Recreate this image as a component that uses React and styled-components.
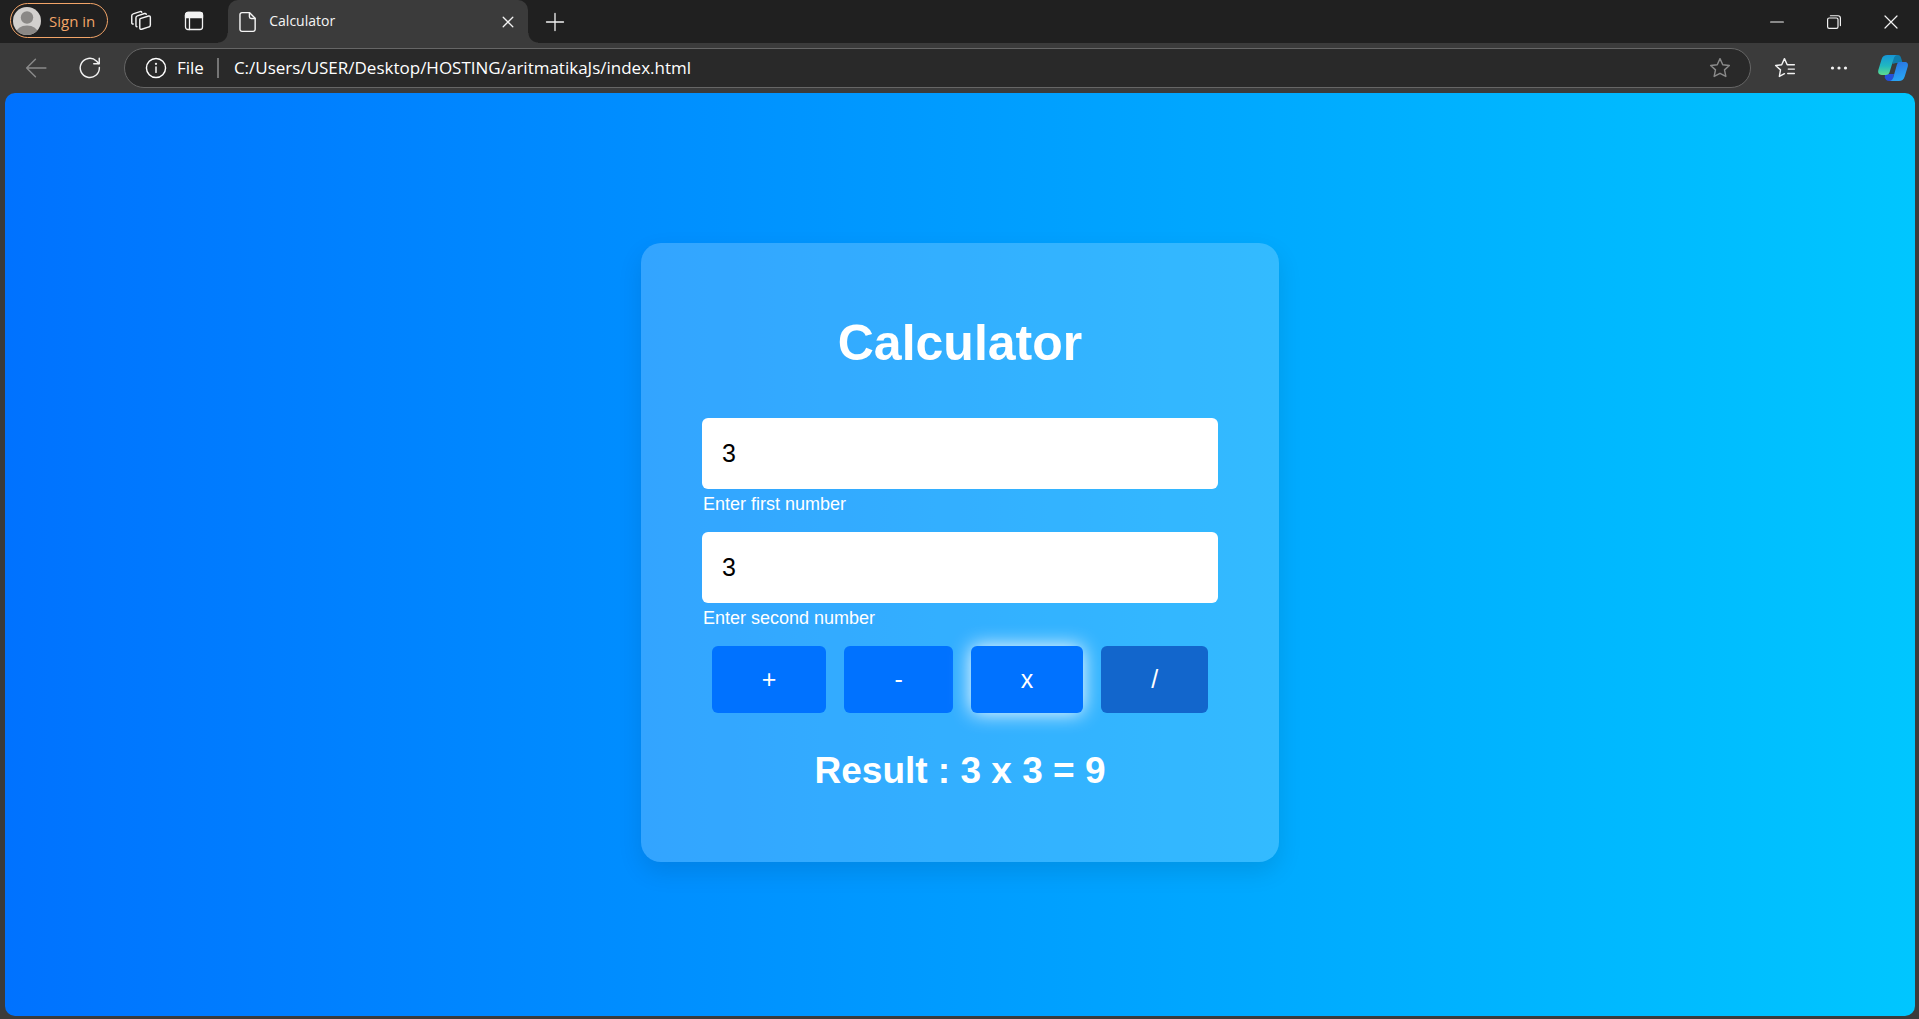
import React, { useState } from "react";
import styled, { createGlobalStyle, css } from "styled-components";

const GlobalStyle = createGlobalStyle`
  *, *::before, *::after { box-sizing: border-box; }
  body { margin: 0; background: #3b3b3b; font-family: "Liberation Sans", Arial, sans-serif; }
  button, input { font-family: inherit; }
`;

const uiFont = css`
  font-family: "Segoe UI", "Open Sans", "Noto Sans", sans-serif;
`;

const Window = styled.div`
  display: flex;
  flex-direction: column;
  min-height: 100vh;
  background: #3b3b3b;
`;

const TabStrip = styled.header`
  ${uiFont}
  display: flex;
  height: 43px;
  background: #202020;
`;

const StripTools = styled.div`
  display: flex;
  align-items: center;
  gap: 13px;
  padding: 0 14px 2px 10px;
`;

const IconButton = styled.button`
  display: flex;
  align-items: center;
  justify-content: center;
  flex: none;
  width: ${(p) => p.$width || 40}px;
  height: 36px;
  padding: 0;
  border: 0;
  background: transparent;
  color: ${(p) => (p.$dim ? "#8a8a8a" : "#f2f2f2")};
`;

const SignIn = styled.button`
  ${uiFont}
  display: flex;
  align-items: center;
  gap: 8px;
  height: 35px;
  padding: 0 12px 0 2px;
  border: 1px solid #f2a468;
  border-radius: 18px;
  background: transparent;
  color: #f2a468;
  font-size: 15px;
  line-height: 20px;
  white-space: nowrap;
`;

const Tab = styled.div`
  position: relative;
  display: flex;
  align-items: center;
  width: 300px;
  padding: 0 8px 0 9px;
  border-radius: 10px 10px 0 0;
  background: #3b3b3b;
  color: #f5f5f5;

  &::before, &::after {
    content: "";
    position: absolute;
    bottom: 0;
    width: 10px;
    height: 10px;
  }
  &::before {
    right: 100%;
    background: radial-gradient(circle at 0 0, #202020 9px, #3b3b3b 10px);
  }
  &::after {
    left: 100%;
    background: radial-gradient(circle at 100% 0, #202020 9px, #3b3b3b 10px);
  }
`;

const TabTitle = styled.span`
  flex: 1;
  padding: 0 0 2px 10px;
  font-size: 14px;
  line-height: 20px;
`;

const WindowControls = styled.div`
  display: flex;
  margin-left: auto;
`;

const ControlButton = styled(IconButton)`
  width: ${(p) => p.$width || 57}px;
  height: 43px;
`;

const Toolbar = styled.nav`
  ${uiFont}
  display: flex;
  align-items: center;
  gap: 14px;
  padding: 5px 6px 5px 16px;
`;

const AddressBar = styled.div`
  display: flex;
  align-items: center;
  flex: 1;
  height: 40px;
  padding: 0 10px 0 20px;
  border: 1px solid #666;
  border-radius: 20px;
  background: #292929;
  color: #fff;
  font-size: 17px;
  line-height: 24px;
`;

const Scheme = styled.span`
  margin-left: 10px;
  padding-right: 13px;
`;

const Divider = styled.span`
  width: 2px;
  height: 20px;
  background: #757575;
`;

const UrlInput = styled.input`
  flex: 1;
  min-width: 0;
  padding: 0 0 0 15px;
  border: 0;
  outline: 0;
  background: transparent;
  color: inherit;
  font-size: 17px;
  line-height: 24px;
`;

const Page = styled.main`
  display: flex;
  flex: 1;
  align-items: center;
  justify-content: center;
  margin: 0 4px 3px 5px;
  padding-bottom: 4px;
  border-radius: 10px;
  background: linear-gradient(to right, #0072ff, #00c6ff);
`;

const Card = styled.form`
  width: 638px;
  max-width: 100%;
  padding: 62px 61px;
  border-radius: 20px;
  background: rgba(255, 255, 255, 0.2);
  box-shadow: 0 10px 25px rgba(0, 0, 0, 0.1);
  color: #fff;
  text-align: center;
`;

const Title = styled.h1`
  margin: 10px 0 46px;
  font-size: 50px;
  line-height: 57px;
`;

const Field = styled.div`
  display: flex;
  flex-direction: column;
  margin-bottom: 16px;
`;

const NumberInput = styled.input`
  width: 100%;
  height: 71px;
  padding: 0 20px;
  border: 0;
  border-radius: 6px;
  background: #fff;
  color: #000;
  font-size: 25px;
`;

const Caption = styled.label`
  margin-top: 4px;
  padding-left: 1px;
  font-size: 18px;
  line-height: 23px;
  text-align: left;
`;

const Operators = styled.div`
  display: flex;
  justify-content: center;
  gap: 18px;
`;

const OperatorButton = styled.button`
  height: 67px;
  padding: 0 50px;
  border: 0;
  border-radius: 6px;
  outline: 0;
  background: ${(p) => (p.$hovered ? "#1266cc" : "#0072ff")};
  box-shadow: ${(p) => (p.$active ? "0 0 20px #fff" : "none")};
  color: #fff;
  font-size: 25px;
`;

const Result = styled.h2`
  margin: 36px 0 8px;
  font-size: 37px;
  line-height: 43px;
`;

const Icon = ({ size = 20, stroke = 1.3, children }) => (
  <svg
    width={size}
    height={size}
    viewBox="0 0 20 20"
    fill="none"
    stroke="currentColor"
    strokeWidth={stroke}
    strokeLinecap="round"
    strokeLinejoin="round"
    aria-hidden="true"
  >
    {children}
  </svg>
);

const Avatar = () => (
  <svg width="28" height="28" viewBox="0 0 28 28" aria-hidden="true">
    <defs>
      <clipPath id="avatar"><circle cx="14" cy="14" r="14" /></clipPath>
    </defs>
    <g clipPath="url(#avatar)">
      <rect width="28" height="28" fill="#d2d0ce" />
      <circle cx="14" cy="10.5" r="6.2" fill="#8a8886" />
      <ellipse cx="14" cy="26" rx="11" ry="7.5" fill="#8a8886" />
    </g>
  </svg>
);

const Copilot = () => (
  <svg width="32" height="28" viewBox="0 0 32 28" aria-hidden="true">
    <defs>
      <linearGradient id="cpLeft" x1="0" y1="0" x2="0" y2="1">
        <stop offset="0" stopColor="#1696d8" />
        <stop offset="0.55" stopColor="#20b8c0" />
        <stop offset="1" stopColor="#5fdc8c" />
      </linearGradient>
      <linearGradient id="cpRight" x1="0" y1="0" x2="0.3" y2="1">
        <stop offset="0" stopColor="#2a6fe0" />
        <stop offset="1" stopColor="#28a4f4" />
      </linearGradient>
    </defs>
    <path d="M15 1h5.500c2.600 0 3.200 1.500 3.900 4l1.200 4H19l-3.500 1z" fill="#0f7cac" />
    <path d="M8 20h9l-1.500 7H12c-2.400 0-3.500-1.300-4.200-3.500z" fill="#2450d8" />
    <path d="M10.500 1H20c-2 .4-2.800 2-3.400 4l-3.800 12.500c-.8 2.600-2 3.500-4.300 3.500H4.800C1.800 21 .6 18.800 1.400 15.800L4.600 5.300C5.500 2.300 7.500 1 10.500 1z" fill="url(#cpLeft)" />
    <path d="M22.500 8h5c3 0 4 2 3.200 4.800l-3 9.700c-.9 3-2.900 4.500-5.800 4.500H13c2-.4 2.800-2 3.400-4L19.500 12c.8-2.800 1.300-4 3-4z" fill="url(#cpRight)" />
  </svg>
);

const STAR = "M10 1.500l2.500 5.500 6 .7-4.400 4 1.200 6L10 14.800l-5.300 2.900 1.200-6-4.400-4 6-.7z";

const OPERATIONS = {
  "+": (a, b) => a + b,
  "-": (a, b) => a - b,
  x: (a, b) => a * b,
  "/": (a, b) => a / b,
};

function BrowserChrome() {
  return (
    <>
      <TabStrip>
        <StripTools>
          <SignIn type="button"><Avatar />Sign in</SignIn>
          <IconButton type="button" aria-label="Workspaces">
            <Icon size={22}>
              <path d="M9.300 7.800l7.500-2.300c1-.3 1.700.2 1.700 1.200v7c0 .9-.5 1.500-1.300 1.700l-6.600 2.100c-1 .3-1.700-.2-1.700-1.200V8.900c0-.6 0-.9.400-1.100z" />
              <path d="M6.300 15.200c-.6 0-.9-.4-.9-1.100V7c0-.9.500-1.500 1.300-1.700l6.500-2.100c.8-.2 1.400.1 1.600.7" />
              <path d="M2.900 12.700c-.8.100-1.300-.4-1.300-1.200V5.200c0-.9.500-1.500 1.300-1.700l6.200-2c.8-.2 1.400 0 1.600.6" />
            </Icon>
          </IconButton>
          <IconButton type="button" aria-label="Tab actions">
            <Icon>
              <rect x="1.500" y="1.500" width="17" height="17" rx="2.500" />
              <path d="M1.500 4a2.500 2.500 0 0 1 2.500-2.500h12A2.500 2.500 0 0 1 18.500 4v2.500h-17z" fill="currentColor" />
              <path d="M5.500 6.500v12" />
            </Icon>
          </IconButton>
        </StripTools>
        <Tab>
          <Icon size={22}>
            <path d="M4.500 1.500h7l5 5v10.200a1.800 1.800 0 0 1-1.800 1.800H4.500a1.800 1.800 0 0 1-1.800-1.800V3.300a1.800 1.800 0 0 1 1.800-1.800z" />
            <path d="M11.300 1.800v3.400c0 1 .6 1.600 1.600 1.600h3.400" />
          </Icon>
          <TabTitle>Calculator</TabTitle>
          <IconButton type="button" $width={24} aria-label="Close tab">
            <Icon size={16} stroke={1.6}><path d="M4 4l12 12M16 4L4 16" /></Icon>
          </IconButton>
        </Tab>
        <ControlButton type="button" $width={54} aria-label="New tab">
          <Icon><path d="M10 1.500v17M1.500 10h17" /></Icon>
        </ControlButton>
        <WindowControls>
          <ControlButton type="button" aria-label="Minimize">
            <Icon size={16} stroke={1.4}><path d="M2 10h16" /></Icon>
          </ControlButton>
          <ControlButton type="button" aria-label="Restore">
            <Icon size={16} stroke={1.5}>
              <rect x="2" y="5" width="13" height="13" rx="2" />
              <path d="M5.500 2.200H15a3 3 0 0 1 3 3v9.300" />
            </Icon>
          </ControlButton>
          <ControlButton type="button" aria-label="Close">
            <Icon size={16} stroke={1.5}><path d="M2.500 2.500l15 15M17.500 2.500l-15 15" /></Icon>
          </ControlButton>
        </WindowControls>
      </TabStrip>
      <Toolbar>
        <IconButton type="button" $dim aria-label="Back">
          <Icon size={22}><path d="M19 10H1.500M9.500 2L1.500 10l8 8" /></Icon>
        </IconButton>
        <IconButton type="button" aria-label="Refresh">
          <Icon size={22}>
            <path d="M18.500 9.500A8.700 8.700 0 1 1 15.800 3.600L18 5.800" />
            <path d="M18.400 1.200v5h-5" />
          </Icon>
        </IconButton>
        <AddressBar>
          <Icon size={22}>
            <circle cx="10" cy="10" r="8.700" />
            <path d="M10 9v5" />
            <circle cx="10" cy="6.200" r="0.400" fill="currentColor" />
          </Icon>
          <Scheme>File</Scheme>
          <Divider />
          <UrlInput aria-label="Address" defaultValue="C:/Users/USER/Desktop/HOSTING/aritmatikaJs/index.html" />
          <IconButton type="button" $dim aria-label="Add to favorites">
            <Icon size={22}><path d={STAR} /></Icon>
          </IconButton>
        </AddressBar>
        <IconButton type="button" aria-label="Favorites">
          <Icon size={22}>
            <path d="M9.500 15.200l-4.600 2.500 1-6L1.500 7.700l5.500-.7L9.500 1.500 12 7h6.500M13 11h5.500M12.500 15h6" />
          </Icon>
        </IconButton>
        <IconButton type="button" aria-label="Settings and more">
          <Icon>
            <g fill="currentColor" stroke="none">
              <circle cx="3.500" cy="10" r="1.600" />
              <circle cx="10" cy="10" r="1.600" />
              <circle cx="16.500" cy="10" r="1.600" />
            </g>
          </Icon>
        </IconButton>
        <IconButton type="button" aria-label="Copilot"><Copilot /></IconButton>
      </Toolbar>
    </>
  );
}

export default function App() {
  const [first, setFirst] = useState("3");
  const [second, setSecond] = useState("3");
  const [operator, setOperator] = useState("x");
  const value = OPERATIONS[operator](Number(first), Number(second));

  return (
    <Window>
      <GlobalStyle />
      <BrowserChrome />
      <Page>
        <Card onSubmit={(e) => e.preventDefault()}>
          <Title>Calculator</Title>
          <Field>
            <NumberInput id="first" inputMode="decimal" value={first} onChange={(e) => setFirst(e.target.value)} />
            <Caption htmlFor="first">Enter first number</Caption>
          </Field>
          <Field>
            <NumberInput id="second" inputMode="decimal" value={second} onChange={(e) => setSecond(e.target.value)} />
            <Caption htmlFor="second">Enter second number</Caption>
          </Field>
          <Operators>
            {Object.keys(OPERATIONS).map((symbol) => (
              <OperatorButton
                key={symbol}
                type="button"
                $active={symbol === operator}
                $hovered={symbol === "/"}
                onClick={() => setOperator(symbol)}
              >
                {symbol}
              </OperatorButton>
            ))}
          </Operators>
          <Result>{`Result : ${first} ${operator} ${second} = ${value}`}</Result>
        </Card>
      </Page>
    </Window>
  );
}
